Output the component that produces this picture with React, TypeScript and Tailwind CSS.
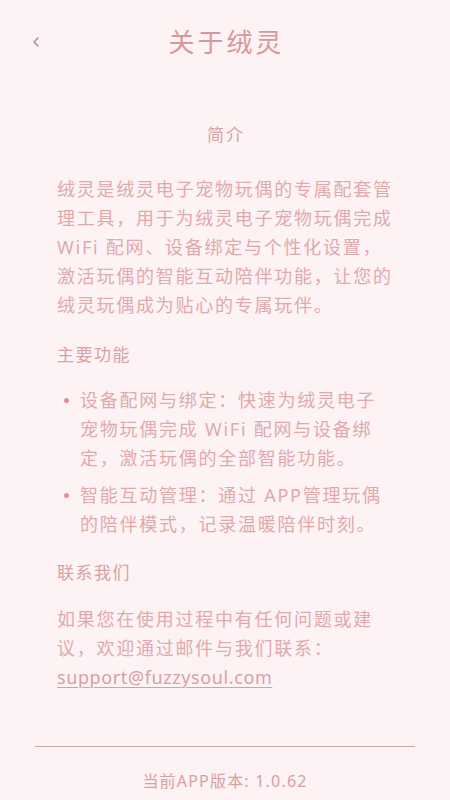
import React from "react";

const cjk = { fontFamily: '"Noto Sans", "Noto Sans CJK SC", sans-serif' };

const App = () => {
  return (
    <div
      className="w-[450px] min-h-[800px] bg-[#fdf3f4] flex flex-col"
      style={cjk}
    >
      <header className="h-[84px] grid grid-cols-[1fr_auto_1fr] items-center">
        <button className="justify-self-start ml-[30px] text-[#b98f9a]">
          <svg width="12" height="14" viewBox="0 0 12 14" fill="none">
            <path
              d="M8 3 L4 7 L8 11"
              stroke="currentColor"
              strokeWidth="1.6"
              strokeLinecap="round"
              strokeLinejoin="round"
            />
          </svg>
        </button>
        <h1 className="text-[26px] leading-none tracking-[3px] text-[#d9979b] pl-[3px]">
          关于绒灵
        </h1>
        <div />
      </header>

      <main className="px-[57px] text-[#e0a9ad]">
        <h2 className="mt-[39px] text-center text-[17px] leading-[24px] tracking-[2px] text-[#d8a1a5] pl-[2px]">
          简介
        </h2>
        <p className="mt-[28px] text-[18px] leading-[29px] tracking-[1.75px] whitespace-nowrap">
          绒灵是绒灵电子宠物玩偶的专属配套管
          <br />
          理工具，用于为绒灵电子宠物玩偶完成
          <br />
          WiFi 配网、设备绑定与个性化设置，
          <br />
          激活玩偶的智能互动陪伴功能，让您的
          <br />
          绒灵玩偶成为贴心的专属玩伴。
        </p>

        <h3 className="mt-[23px] text-[17px] leading-[24px] tracking-[1.5px] text-[#d8a1a5]">
          主要功能
        </h3>
        <ul className="mt-[19px] flex flex-col gap-[8px] text-[18px] leading-[29px] tracking-[1.75px] whitespace-nowrap">
          <li className="flex ml-[7px]">
            <span className="w-[5px] h-[5px] rounded-full bg-[#e88e93] mt-[12px] shrink-0" />
            <span className="ml-[11px]">
              设备配网与绑定：快速为绒灵电子
              <br />
              宠物玩偶完成 WiFi 配网与设备绑
              <br />
              定，激活玩偶的全部智能功能。
            </span>
          </li>
          <li className="flex ml-[7px]">
            <span className="w-[5px] h-[5px] rounded-full bg-[#e88e93] mt-[12px] shrink-0" />
            <span className="ml-[11px]">
              智能互动管理：通过 APP管理玩偶
              <br />
              的陪伴模式，记录温暖陪伴时刻。
            </span>
          </li>
        </ul>

        <h3 className="mt-[22px] text-[17px] leading-[24px] tracking-[1.5px] text-[#d8a1a5]">
          联系我们
        </h3>
        <p className="mt-[20px] text-[18px] leading-[29px] tracking-[1.75px] whitespace-nowrap">
          如果您在使用过程中有任何问题或建
          <br />
          议，欢迎通过邮件与我们联系：
          <br />
          <a
            href="mailto:support@fuzzysoul.com"
            className="underline underline-offset-[3px] decoration-1 tracking-[0.6px] text-[#d8a0a5]"
          >
            support@fuzzysoul.com
          </a>
        </p>
      </main>

      <footer className="mt-[54px] pb-[7px]">
        <div className="mx-[35px] h-px bg-[#cfa7ac]" />
        <p className="mt-[22px] text-center text-[16px] leading-[24px] tracking-[1.2px] text-[#d6a0a4]">
          当前APP版本: 1.0.62
        </p>
      </footer>
    </div>
  );
};

export default App;
